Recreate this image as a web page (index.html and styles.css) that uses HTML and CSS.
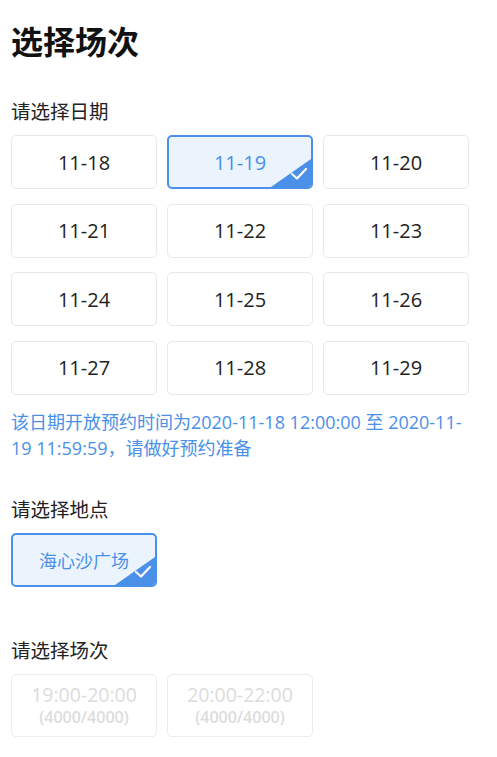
FILE: index.html
```html
<!DOCTYPE html>
<html lang="zh-CN">

<head>
    <meta charset="UTF-8">
    <meta name="viewport" content="width=device-width, initial-scale=1.0">
    <title>选择场次</title>
    <link rel="stylesheet" href="styles.css">
</head>

<body>
    <h1>选择场次</h1>

    <section class="block">
        <div class="label">请选择日期</div>
        <div class="grid">
            <div class="opt">11-18</div>
            <div class="opt selected">11-19
                <span class="tick"><svg viewBox="0 0 40 28" width="40" height="28"><path d="M40 0 V28 H0 Z" fill="#4a90e8"/><path d="M21 15 L26 19.5 L35 10" fill="none" stroke="#fff" stroke-width="2.2" stroke-linecap="round" stroke-linejoin="round"/></svg></span>
            </div>
            <div class="opt">11-20</div>
            <div class="opt">11-21</div>
            <div class="opt">11-22</div>
            <div class="opt">11-23</div>
            <div class="opt">11-24</div>
            <div class="opt">11-25</div>
            <div class="opt">11-26</div>
            <div class="opt">11-27</div>
            <div class="opt">11-28</div>
            <div class="opt">11-29</div>
        </div>
        <p class="note">该日期开放预约时间为2020-11-18 12:00:00 至 2020-11-19 11:59:59，请做好预约准备</p>
    </section>

    <section class="block">
        <div class="label">请选择地点</div>
        <div class="grid">
            <div class="opt place selected">海心沙广场
                <span class="tick"><svg viewBox="0 0 40 28" width="40" height="28"><path d="M40 0 V28 H0 Z" fill="#4a90e8"/><path d="M21 15 L26 19.5 L35 10" fill="none" stroke="#fff" stroke-width="2.2" stroke-linecap="round" stroke-linejoin="round"/></svg></span>
            </div>
        </div>
    </section>

    <section class="block sessions">
        <div class="label">请选择场次</div>
        <div class="grid">
            <div class="opt session disabled"><span>19:00-20:00</span><small>(4000/4000)</small></div>
            <div class="opt session disabled"><span>20:00-22:00</span><small>(4000/4000)</small></div>
        </div>
    </section>
</body>

</html>
```

FILE: styles.css
```css
body {
    margin: 0;
    padding: 0 28px 20px 11px;
    font-family: "Open Sans", "Noto Sans CJK SC", sans-serif;
    color: #222;
    background: #fff;
}

h1 {
    margin: 19px 0 0;
    font-size: 32px;
    line-height: 46px;
    font-weight: bold;
    color: #111;
}

.block {
    margin-top: 34px;
}

.block+.block {
    margin-top: 36px;
}

.block.sessions {
    margin-top: 51px;
}

.label {
    font-size: 19.5px;
    line-height: 26px;
    color: #222;
    margin-bottom: 10px;
}

.grid {
    display: grid;
    grid-template-columns: repeat(3, 146px);
    column-gap: 10px;
    row-gap: 14.5px;
}

.opt {
    position: relative;
    height: 54px;
    box-sizing: border-box;
    border: 1px solid #e9e9e9;
    border-radius: 5px;
    display: flex;
    align-items: center;
    justify-content: center;
    font-size: 20px;
    color: #222;
    overflow: hidden;
}

.opt.place {
    font-size: 18px;
}

.opt.selected {
    border: 2px solid #4a90e8;
    background: #ebf4fd;
    color: #4a90e8;
}

.tick {
    position: absolute;
    right: 0;
    bottom: 0;
    line-height: 0;
}

.note {
    margin: 14px 0 0;
    font-size: 18px;
    line-height: 26px;
    color: #4a90e8;
}

.session {
    height: 63px;
    flex-direction: column;
    font-size: 19.5px;
}

.session span {
    line-height: 24px;
}

.session small {
    font-size: 16px;
    line-height: 20px;
    font-weight: 600;
}

.disabled {
    color: #dcdcdc;
    border-color: #ececec;
}
```
